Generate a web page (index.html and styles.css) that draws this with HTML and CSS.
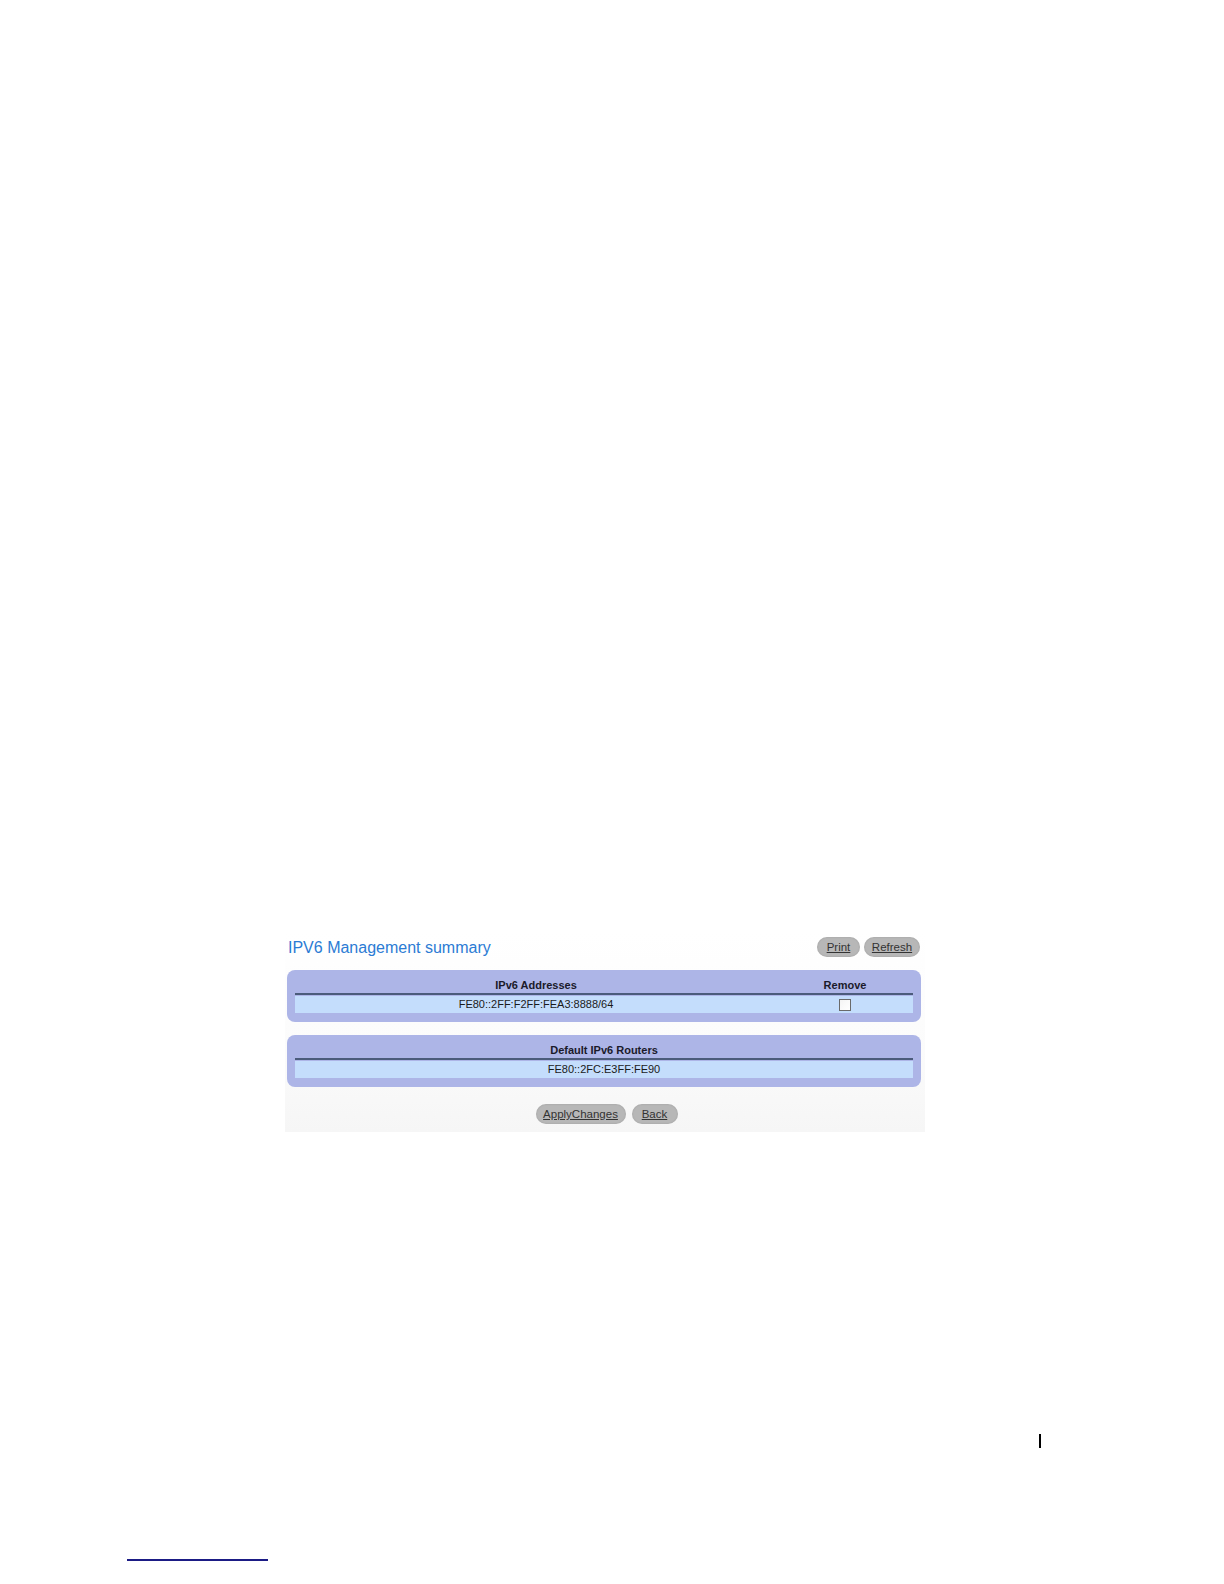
FILE: index.html
```html
<!DOCTYPE html>
<html>
<head>
<meta charset="utf-8">
<link rel="stylesheet" href="styles.css">
</head>
<body>
<div class="page">
  <div class="shot">
    <div class="topbar">
      <div class="title">IPV6 Management summary</div>
      <div class="btns">
        <span class="btn w-print">Print</span>
        <span class="btn w-refresh">Refresh</span>
      </div>
    </div>
    <div class="panel first">
      <div class="hdr">
        <div class="c-addr">IPv6 Addresses</div>
        <div class="c-rem">Remove</div>
      </div>
      <div class="row">
        <div class="c-addr">FE80::2FF:F2FF:FEA3:8888/64</div>
        <div class="c-rem"><span class="chk"></span></div>
      </div>
    </div>
    <div class="panel second">
      <div class="hdr">
        <div class="c-full">Default IPv6 Routers</div>
      </div>
      <div class="row">
        <div class="c-full">FE80::2FC:E3FF:FE90</div>
      </div>
    </div>
    <div class="actions">
      <span class="btn w-apply">ApplyChanges</span>
      <span class="btn w-back">Back</span>
    </div>
  </div>
  <div class="pagebar"></div>
  <div class="footline"></div>
</div>
</body>
</html>
```
FILE: styles.css
```css
html, body {
  margin: 0;
  padding: 0;
  background: #ffffff;
}
.page {
  width: 1224px;
  height: 1584px;
  overflow: hidden;
  font-family: "Liberation Sans", Arial, sans-serif;
}
.shot {
  margin-left: 285px;
  margin-top: 933px;
  width: 640px;
  padding-bottom: 8px;
  background: linear-gradient(#ffffff, #fbfbfb 60%, #f6f6f6);
}
.topbar {
  display: flex;
  justify-content: space-between;
  align-items: center;
  height: 28px;
  padding: 0 4px 0 3px;
}
.title {
  font-size: 16px;
  color: #2b7bd4;
  padding-top: 2px;
}
.btns {
  display: flex;
  gap: 4px;
  padding-right: 1px;
}
.btn {
  display: inline-flex;
  align-items: center;
  justify-content: center;
  height: 20px;
  border-radius: 10px;
  background: #b7b7b7;
  box-shadow: inset 0 0 2px rgba(0,0,0,0.15);
  color: #333333;
  font-size: 11.5px;
  text-decoration: underline;
}
.w-print { width: 43px; }
.w-refresh { width: 56px; }
.w-apply { width: 90px; }
.w-back { width: 46px; }
.panel {
  margin-left: 2px;
  width: 634px;
  box-sizing: border-box;
  padding: 8px 8px 9px;
  background: #adb5e7;
  border-radius: 8px;
}
.panel.first { margin-top: 9px; }
.panel.second { margin-top: 13px; }
.hdr {
  display: flex;
  height: 15px;
  line-height: 15px;
  font-size: 11px;
  font-weight: bold;
  color: #1a1a2a;
  border-bottom: 2px solid #4b5b7b;
}
.row {
  display: flex;
  height: 17px;
  line-height: 17px;
  margin-top: 1px;
  background: #c4ddfc;
  font-size: 11px;
  color: #1a1a1a;
}
.c-addr {
  width: 482px;
  text-align: center;
}
.c-rem {
  flex: 1;
  text-align: center;
  display: flex;
  justify-content: center;
  align-items: center;
}
.c-full {
  flex: 1;
  text-align: center;
}
.chk {
  display: inline-block;
  width: 10px;
  height: 10px;
  border: 1px solid #6a6a6a;
  background: linear-gradient(135deg, #f4f4f4, #ffffff);
}
.actions {
  display: flex;
  justify-content: center;
  gap: 6px;
  margin-top: 17px;
  padding-left: 3px;
}
.pagebar {
  margin-left: 1039px;
  margin-top: 302px;
  width: 1.5px;
  height: 14px;
  background: #000000;
}
.footline {
  margin-left: 127px;
  margin-top: 111px;
  width: 141px;
  height: 2px;
  background: #1b1b85;
}
```
